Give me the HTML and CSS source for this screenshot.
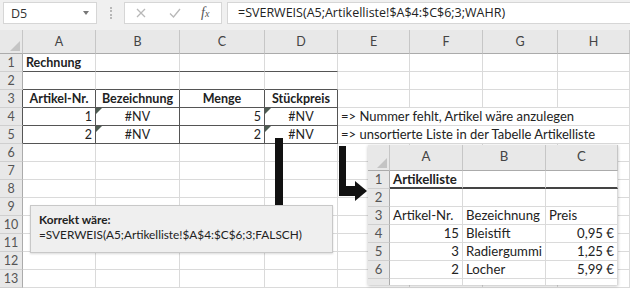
FILE: index.html
```html
<!DOCTYPE html>
<html lang="de">
<head>
  <meta charset="UTF-8">
  <title>SVERWEIS Beispiel</title>
  <link rel="stylesheet" href="styles.css">
</head>
<body>
  <div class="page">
    <div class="toolbar">
      <div class="namebox">D5<span class="caret"></span></div>
      <div class="grip"><span></span></div>
      <div class="fxbox">
        <svg class="ico" width="10" height="10" viewBox="0 0 10 10"><path d="M1 1L9 9M9 1L1 9" stroke="#b8b8b8" stroke-width="1.3" fill="none"/></svg>
        <svg class="ico ok" width="12" height="10" viewBox="0 0 12 10"><path d="M1 5.5L4.5 9L11 1" stroke="#b8b8b8" stroke-width="1.3" fill="none"/></svg>
        <span class="fx">f<small>x</small></span>
      </div>
      <div class="formula">=SVERWEIS(A5;Artikelliste!$A$4:$C$6;3;WAHR)</div>
    </div>

    <div class="sheet">
      <div class="corner"></div><div class="ch">A</div><div class="ch">B</div><div class="ch">C</div><div class="ch">D</div><div class="ch">E</div><div class="ch">F</div><div class="ch">G</div><div class="ch">H</div>

      <div class="rh">1</div><div class="b bb">Rechnung</div><div class="bb"></div><div class="bb"></div><div class="bb"></div><div></div><div></div><div></div><div></div>
      <div class="rh">2</div><div class="bb"></div><div class="bb"></div><div class="bb"></div><div class="bb"></div><div></div><div></div><div></div><div></div>
      <div class="rh dk">3</div><div class="hd br bb">Artikel-Nr.</div><div class="hd br bb">Bezeichnung</div><div class="hd br bb">Menge</div><div class="hd br bb">Stückpreis</div><div></div><div></div><div></div><div></div>
      <div class="rh dk">4</div><div class="r br bb">1</div><div class="c br bb err">#NV</div><div class="r br bb">5</div><div class="c br bb err">#NV</div><div class="note">=&gt; Nummer fehlt, Artikel wäre anzulegen</div>
      <div class="rh dk">5</div><div class="r br bb">2</div><div class="c br bb err">#NV</div><div class="r br bb">2</div><div class="c br bb err">#NV</div><div class="note">=&gt; unsortierte Liste in der Tabelle Artikelliste</div>
      <div class="rh">6</div><div></div><div></div><div></div><div></div><div></div><div></div><div></div><div></div>
      <div class="rh">7</div><div></div><div></div><div></div><div></div><div></div><div></div><div></div><div></div>
      <div class="rh">8</div><div></div><div></div><div></div><div></div><div></div><div></div><div></div><div></div>
      <div class="rh">9</div><div></div><div></div><div></div><div></div><div></div><div></div><div></div><div></div>
      <div class="rh">10</div><div></div><div></div><div></div><div></div><div></div><div></div><div></div><div></div>
      <div class="rh">11</div><div></div><div></div><div></div><div></div><div></div><div></div><div></div><div></div>
      <div class="rh">12</div><div></div><div></div><div></div><div></div><div></div><div></div><div></div><div></div>
      <div class="rh">13</div><div></div><div></div><div></div><div></div><div></div><div></div><div></div><div></div>
    </div>

    <!-- arrows drawn on top of the grid -->
    <svg class="arrows" width="630" height="289" viewBox="0 0 630 289">
      <rect x="275" y="138" width="8" height="70" fill="#111"/>
      <polygon points="269,207 289,207 279,218" fill="#111"/>
      <rect x="339" y="146" width="7" height="50" fill="#111"/>
      <rect x="339" y="186" width="18" height="10" fill="#111"/>
      <polygon points="355,181 355,201 367,191" fill="#111"/>
    </svg>

    <div class="callout">
      <div class="b">Korrekt wäre:</div>
      <div>=SVERWEIS(A5;Artikelliste!$A$4:$C$6;3;FALSCH)</div>
    </div>

    <!-- second sheet shown as inset -->
    <div class="inset">
      <div class="corner"></div><div class="ch">A</div><div class="ch">B</div><div class="ch">C</div>
      <div class="rh">1</div><div class="b tb">Artikelliste</div><div class="tb"></div><div class="tb"></div>
      <div class="rh">2</div><div></div><div></div><div></div>
      <div class="rh">3</div><div>Artikel-Nr.</div><div>Bezeichnung</div><div>Preis</div>
      <div class="rh">4</div><div class="r">15</div><div>Bleistift</div><div class="r">0,95 €</div>
      <div class="rh">5</div><div class="r">3</div><div>Radiergummi</div><div class="r">1,25 €</div>
      <div class="rh">6</div><div class="r">2</div><div>Locher</div><div class="r">5,99 €</div>
      <div class="rh"></div><div></div><div></div><div></div>
    </div>
  </div>
</body>
</html>
```

FILE: styles.css
```css
body {
  margin: 0;
  font-family: Lato, "Liberation Sans", sans-serif;
  font-size: 12.5px;
  color: #222;
  background: #fff;
}
.page {
  position: relative;
  width: 630px;
  height: 289px;
  overflow: hidden;
}

/* formula bar */
.toolbar {
  display: flex;
  align-items: flex-start;
  height: 30px;
  box-sizing: border-box;
  padding: 2px 0 0 3px;
  background: #f0f0f0;
  font-family: "Open Sans", sans-serif;
}
.namebox, .fxbox, .formula {
  height: 22px;
  box-sizing: border-box;
  background: #fff;
  border: 1px solid #d6d6d6;
}
.namebox {
  width: 94px;
  display: flex;
  align-items: center;
  justify-content: space-between;
  padding: 0 7px 0 7px;
  color: #333;
}
.caret {
  width: 0;
  height: 0;
  border-left: 3.5px solid transparent;
  border-right: 3.5px solid transparent;
  border-top: 4px solid #777;
}
.grip {
  width: 27px;
  height: 22px;
  display: flex;
  justify-content: center;
  align-items: center;
}
.grip span {
  height: 12px;
  border-left: 2px dotted #b8b8b8;
}
.fxbox {
  width: 98px;
  display: flex;
  align-items: center;
  padding-left: 11px;
}
.ok { margin-left: 23px; }
.fx {
  margin-left: 20px;
  font-family: "Liberation Serif", serif;
  font-style: italic;
  font-size: 14px;
  color: #555;
}
.fx small { font-size: 10px; }
.formula {
  flex: 1;
  margin-left: 5px;
  border-right: none;
  padding-left: 10px;
  line-height: 20px;
  color: #222;
}

/* grid */
.sheet, .inset {
  display: grid;
}
.sheet {
  grid-template-columns: 23px 73px 84px 85px 73px 72px 73px 75px 72px;
  grid-template-rows: 24px repeat(13, 18px);
}
.sheet > div, .inset > div {
  box-sizing: border-box;
  border-right: 1px solid #dadada;
  border-bottom: 1px solid #dadada;
  padding: 0 3px;
  line-height: 17px;
  white-space: nowrap;
  overflow: hidden;
  position: relative;
}
.sheet > .ch, .inset > .ch {
  background: #e8e8e8;
  color: #444;
  text-align: center;
  line-height: 23px;
  border-right-color: #c6c6c6;
  border-bottom-color: #ababab;
}
.sheet > .rh, .inset > .rh {
  background: #e8e8e8;
  color: #555;
  text-align: center;
  padding: 0;
  border-right-color: #ababab;
  border-bottom-color: #cfcfcf;
}
.sheet > .corner, .inset > .corner {
  background: #e8e8e8;
  border-right-color: #c6c6c6;
  border-bottom-color: #ababab;
}
.corner::after {
  content: "";
  position: absolute;
  right: 2px;
  bottom: 2px;
  border-left: 10px solid transparent;
  border-bottom: 10px solid #c4c4c4;
}

.b { font-weight: bold; }
.hd { font-weight: bold; text-align: center; }
.r { text-align: right; }
.c { text-align: center; }
.sheet > .bb { border-bottom-color: #555; }
.sheet > .br { border-right-color: #555; }
.sheet > .dk { border-right-color: #555; }
.sheet > .note {
  grid-column: span 4;
  overflow: visible;
  font-size: 13px;
}
.err::before {
  content: "";
  position: absolute;
  left: 0;
  top: 0;
  border-top: 6px solid #4d5c52;
  border-right: 6px solid transparent;
}

/* overlays */
.arrows {
  position: absolute;
  left: 0;
  top: 0;
  pointer-events: none;
}
.callout {
  position: absolute;
  left: 30px;
  top: 205px;
  width: 303px;
  height: 48px;
  box-sizing: border-box;
  padding: 6px 8px;
  background: #efefef;
  border: 1px solid #c8c8c8;
  box-shadow: 0 1px 2px rgba(0, 0, 0, 0.15);
  font-size: 11.8px;
  line-height: 15px;
}
.inset {
  position: absolute;
  left: 368px;
  top: 145px;
  width: 250px;
  height: 140px;
  overflow: hidden;
  background: #fff;
  font-size: 13.2px;
  grid-template-columns: 22px 73px 83px 72px;
  grid-template-rows: 26px repeat(6, 18px) 8px;
  box-shadow: 0 1px 3px rgba(0, 0, 0, 0.25);
}
.inset > .tb { border-bottom: 2px solid #444; }
```
